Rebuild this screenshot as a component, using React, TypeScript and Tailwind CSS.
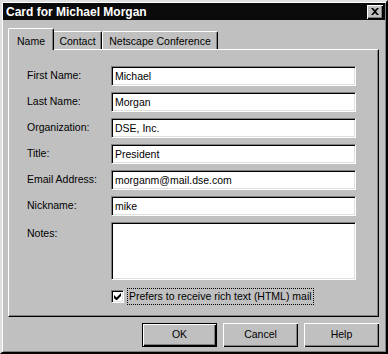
const fields: [string, string][] = [
  ['First Name:', 'Michael'],
  ['Last Name:', 'Morgan'],
  ['Organization:', 'DSE, Inc.'],
  ['Title:', 'President'],
  ['Email Address:', 'morganm@mail.dse.com'],
  ['Nickname:', 'mike'],
];

const sunken =
  'bg-white border-t border-l border-b border-r border-t-[#808080] border-l-[#808080] border-b-white border-r-white shadow-[inset_1px_1px_0_#000,inset_-1px_-1px_0_#dfdfdf]';

function Field({ value, tall }: { value?: string; tall?: boolean }) {
  return (
    <div className={`${sunken} w-[245px] ${tall ? 'h-[58px]' : 'h-[20px]'} flex items-start pl-[3px] pt-[2px] text-[10.5px] leading-[14px] text-black`}>
      {value}
    </div>
  );
}

function Button({ label, primary }: { label: string; primary?: boolean }) {
  return (
    <div
      className={`w-[75px] h-[24px] flex items-center justify-center text-[10.5px] text-black bg-[#c0c0c0] ${
        primary
          ? 'border border-black shadow-[inset_1px_1px_0_#fff,inset_-1px_-1px_0_#000,inset_-2px_-2px_0_#808080]'
          : 'shadow-[inset_1px_1px_0_#fff,inset_-1px_-1px_0_#000,inset_-2px_-2px_0_#808080]'
      }`}
    >
      {label}
    </div>
  );
}

export default function App() {
  return (
    <div className="w-[388px] h-[354px] bg-[#c0c0c0] font-['Liberation_Sans',Arial,sans-serif] border-2 border-t-[#dfdfdf] border-l-[#dfdfdf] border-r-black border-b-black shadow-[inset_1px_1px_0_#fff,inset_-1px_-1px_0_#808080] p-px flex flex-col">
      {/* title bar */}
      <div className="h-[17px] bg-[#0a0a0a] flex items-center justify-between pl-[3px] pr-[2px]">
        <span className="text-white font-bold text-[12px] leading-none">Card for Michael Morgan</span>
        <div className="w-[16px] h-[14px] bg-[#c0c0c0] shadow-[inset_1px_1px_0_#fff,inset_-1px_-1px_0_#000,inset_-2px_-2px_0_#808080] flex items-center justify-center">
          <svg width="8" height="7" viewBox="0 0 8 7">
            <path d="M0 0h2l2 2 2-2h2L5 3.5 8 7H6L4 5 2 7H0l3-3.5z" fill="#000" />
          </svg>
        </div>
      </div>

      {/* tabs */}
      <div className="mt-[8px] ml-[5px] h-[22px] -mb-px flex items-end relative z-10 text-[10.5px] text-black">
        <div className="w-[46px] h-[22px] bg-[#c0c0c0] border-l border-t border-l-white border-t-white border-r border-r-black shadow-[inset_-1px_0_0_#808080] rounded-tl-[2px] rounded-tr-[2px] flex items-start justify-center pt-[5px]">
          Name
        </div>
        <div className="w-[48px] h-[18px] border-t border-t-white border-r border-r-black shadow-[inset_-1px_0_0_#808080] rounded-tr-[2px] flex items-start justify-center pt-[2px] mb-px">
          Contact
        </div>
        <div className="w-[116px] h-[18px] border-l border-l-white border-t border-t-white border-r border-r-black shadow-[inset_-1px_0_0_#808080] rounded-tl-[2px] rounded-tr-[2px] flex items-start justify-center pt-[2px] mb-px">
          Netscape Conference
        </div>
      </div>

      {/* panel */}
      <div className="ml-[5px] w-[371px] h-[268px] border border-t-white border-l-white border-r-black border-b-black shadow-[inset_-1px_-1px_0_#808080] flex flex-col pl-[18px] pt-[16px] gap-[6px] text-[10.5px] text-black">
        {fields.map(([label, value]) => (
          <div key={label} className="flex items-center">
            <div className="w-[84px]">{label}</div>
            <Field value={value} />
          </div>
        ))}
        <div className="flex items-start">
          <div className="w-[84px] pt-[4px]">Notes:</div>
          <Field tall />
        </div>
        <div className="flex items-center ml-[84px] mt-[3px] h-[15px]">
          <div className={`${sunken} w-[13px] h-[13px] flex items-center justify-center`}>
            <svg width="7" height="7" viewBox="0 0 7 7">
              <path d="M0 2v3l2 2h1l4-4V0L2.5 4.5z" fill="#000" />
            </svg>
          </div>
          <div className="ml-[4px] px-[1px] h-[15px] flex items-center outline-1 outline-dotted outline-black">
            Prefers to receive rich text (HTML) mail
          </div>
        </div>
      </div>

      {/* buttons */}
      <div className="mt-[6px] flex justify-end gap-[6px] pr-[6px]">
        <Button label="OK" primary />
        <Button label="Cancel" />
        <Button label="Help" />
      </div>
    </div>
  );
}
